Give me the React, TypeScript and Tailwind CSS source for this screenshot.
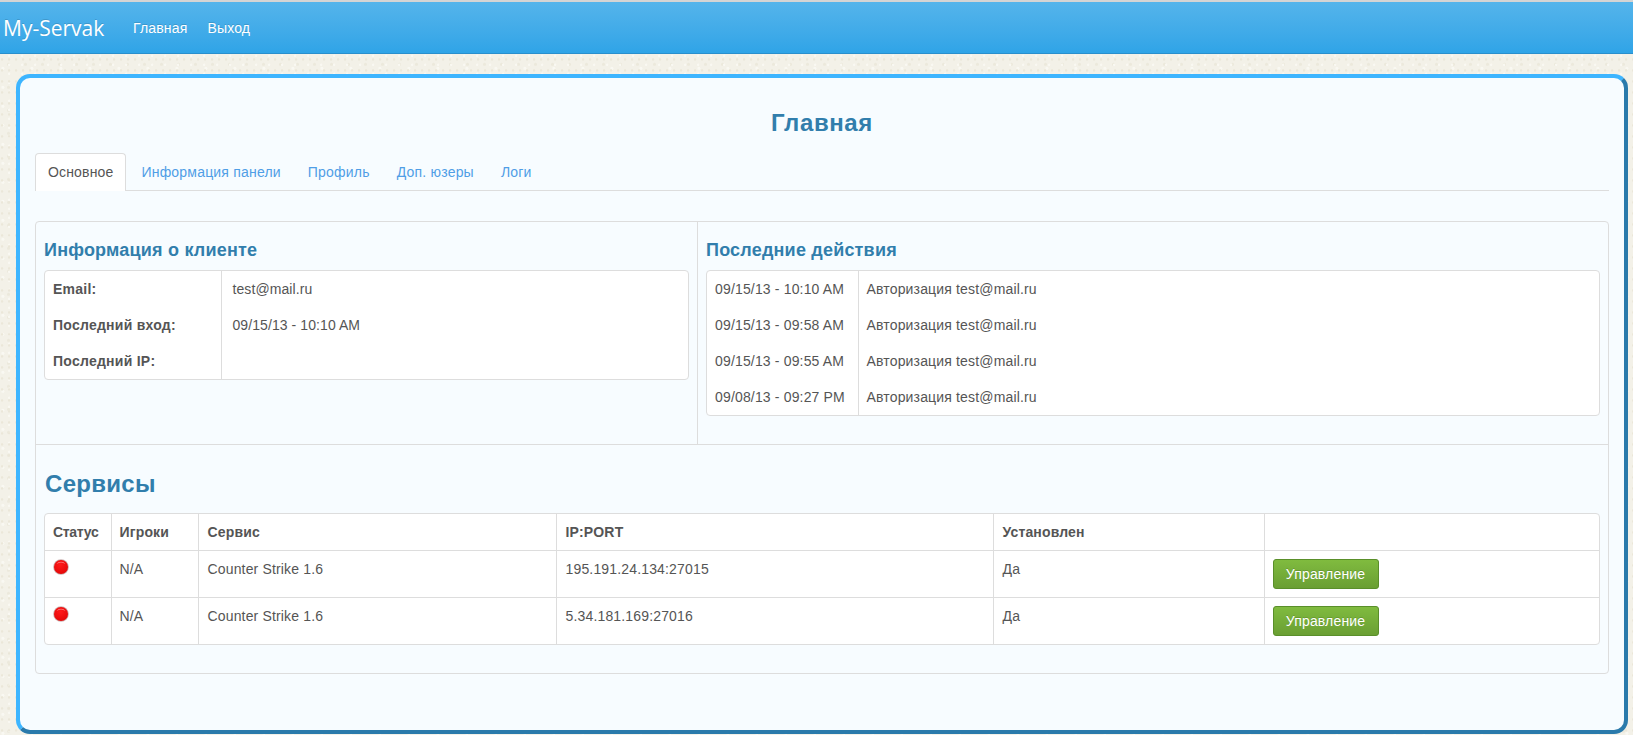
const sans = "font-['Liberation_Sans',Arial,sans-serif]";

function Dot() {
  return (
    <svg width="16" height="16" viewBox="0 0 16 16" className="block">
      <defs>
        <radialGradient id="dotFill" cx="45%" cy="35%" r="65%">
          <stop offset="0%" stopColor="#ff1a1a" />
          <stop offset="100%" stopColor="#e40808" />
        </radialGradient>
      </defs>
      <circle cx="8" cy="8" r="7.8" fill="#c9b0b0" />
      <circle cx="8" cy="8" r="7" fill="url(#dotFill)" />
      <path d="M3.4 5.2 A5.6 5.6 0 0 1 12.6 5.2 A8 8 0 0 0 3.4 5.2Z" fill="#ff9a9a" opacity="0.8" />
    </svg>
  );
}

function InfoTable({ rows, first, firstBold }: { rows: string[][]; first: number; firstBold?: boolean }) {
  return (
    <div className="overflow-hidden rounded-[4px] border border-[#dddddd] bg-white">
      <table className="w-full table-fixed border-collapse">
        <colgroup>
          <col style={{ width: first }} />
          <col />
        </colgroup>
        <tbody>
          {rows.map((r) => (
            <tr key={r[0] + r[1]} className="h-9">
              <td className={`border-r border-[#dddddd] px-2 py-2 align-top leading-5 ${firstBold ? "font-bold tracking-[0.25px]" : ""}`}>
                {r[0]}
              </td>
              <td className={`py-2 pr-2 align-top leading-5 ${firstBold ? "pl-[11px] tracking-[0.08px]" : "pl-2"}`}>{r[1]}</td>
            </tr>
          ))}
        </tbody>
      </table>
    </div>
  );
}

const services = [
  ["N/A", "Counter Strike 1.6", "195.191.24.134:27015", "Да"],
  ["N/A", "Counter Strike 1.6", "5.34.181.169:27016", "Да"],
];

function ManageButton() {
  return (
    <button className="h-[30px] w-[106px] rounded-[3px] border border-[#5a8f2a] bg-gradient-to-b from-[#80bb3f] to-[#6a9f33] text-center text-[14px] leading-5 text-white [text-shadow:0_-1px_0_rgba(0,0,0,0.15)]">
      Управление
    </button>
  );
}

export default function App() {
  return (
    <div
      className={`h-[735px] w-full overflow-hidden bg-[#f3f1e8] bg-[radial-gradient(circle_at_30%_40%,#ebe7d9_0.8px,transparent_1.6px),radial-gradient(circle_at_70%_20%,#f9f8f2_0.8px,transparent_1.6px),radial-gradient(circle_at_50%_80%,#ece9dc_1px,transparent_2px),radial-gradient(circle_at_10%_60%,#f9f8f2_1px,transparent_2px)] bg-[length:7px_11px,13px_9px,17px_23px,29px_19px] text-[14px] leading-5 tracking-[0.16px] text-[#555555] ${sans}`}
    >
      <header className="flex h-[54px] items-center border-t-2 border-b border-t-[#d4d4d4] border-b-[#2a8fcc] bg-gradient-to-b from-[#54b4eb] to-[#2fa4e7] pl-[3px] text-white [text-shadow:0_-1px_0_rgba(0,0,0,0.15)]">
        <span className="w-[130px] font-['Open_Sans',sans-serif] text-[21px] tracking-normal">My-Servak</span>
        <nav className="flex gap-[20px]">
          <a>Главная</a>
          <a>Выход</a>
        </nav>
      </header>

      <main className="mt-5 mr-[5px] ml-4 h-[660px] rounded-[14px] border-4 border-t-[#3db5ff] border-r-[#2a7aab] border-b-[#2a7aab] border-l-[#3db5ff] bg-[#f7fcff] px-[15px]">
        <h1 className="mt-[30px] text-center text-[24px] leading-[30px] font-bold tracking-[0.6px] text-[#317eac]">Главная</h1>

        <div className="mt-[15px] flex h-[38px] items-stretch border-b border-[#dddddd]">
          <a className="-mb-px rounded-t-[4px] border border-b-0 border-[#dddddd] bg-white px-[12px] pt-2 text-[#555555]">Основное</a>
          <div className="flex gap-[27px] pl-[15px] pt-[9px] tracking-[0.2px] text-[#4f9ee6]">
            <a>Информация панели</a>
            <a>Профиль</a>
            <a>Доп. юзеры</a>
            <a>Логи</a>
          </div>
        </div>

        <section className="mt-[30px] h-[453px] rounded-[4px] border border-[#dddddd]">
          <div className="grid h-[223px] grid-cols-[662px_1fr] border-b border-[#dddddd]">
            <div className="border-r border-[#dddddd] px-2">
              <h3 className="mt-[18px] mb-[10px] text-[18px] leading-5 font-bold tracking-[0.2px] text-[#317eac]">Информация о клиенте</h3>
              <InfoTable
                first={176}
                firstBold
                rows={[
                  ["Email:", "test@mail.ru"],
                  ["Последний вход:", "09/15/13 - 10:10 AM"],
                  ["Последний IP:", ""],
                ]}
              />
            </div>
            <div className="px-2">
              <h3 className="mt-[18px] mb-[10px] text-[18px] leading-5 font-bold tracking-[0.2px] text-[#317eac]">Последние действия</h3>
              <InfoTable
                first={151}
                rows={[
                  ["09/15/13 - 10:10 AM", "Авторизация test@mail.ru"],
                  ["09/15/13 - 09:58 AM", "Авторизация test@mail.ru"],
                  ["09/15/13 - 09:55 AM", "Авторизация test@mail.ru"],
                  ["09/08/13 - 09:27 PM", "Авторизация test@mail.ru"],
                ]}
              />
            </div>
          </div>

          <div className="px-2">
            <h2 className="mt-[26px] mb-[16px] pl-px text-[24px] leading-[26px] font-bold tracking-[0.3px] text-[#317eac]">Сервисы</h2>
            <div className="overflow-hidden rounded-[4px] border border-[#dddddd] bg-white">
              <table className="w-full table-fixed border-collapse">
                <colgroup>
                  <col className="w-[66px]" />
                  <col className="w-[87px]" />
                  <col className="w-[358px]" />
                  <col className="w-[437px]" />
                  <col className="w-[271px]" />
                  <col />
                </colgroup>
                <thead>
                  <tr className="h-[36px]">
                    {["Статус", "Игроки", "Сервис", "IP:PORT", "Установлен", ""].map((h, i) => (
                      <th
                        key={i}
                        className={`border-r border-b border-[#dddddd] text-left align-middle font-bold last:border-r-0 ${i === 0 ? "px-2 tracking-[-0.3px]" : i === 1 ? "px-2 tracking-[0.15px]" : "pr-2 pl-[9px] tracking-[0.15px]"}`}
                      >
                        {h}
                      </th>
                    ))}
                  </tr>
                </thead>
                <tbody>
                  {services.map((s, i) => (
                    <tr key={s[2]} className={`h-[47px] ${i === 0 ? "border-b border-[#dddddd]" : ""}`}>
                      <td className="border-r border-[#dddddd] px-2 pt-2 align-top"><Dot /></td>
                      {s.map((c, j) => (
                        <td key={c} className={`border-r border-[#dddddd] pt-2 pr-2 align-top ${j === 0 ? "pl-2" : "pl-[9px]"}`}>{c}</td>
                      ))}
                      <td className="px-2 pt-2 align-top"><ManageButton /></td>
                    </tr>
                  ))}
                </tbody>
              </table>
            </div>
          </div>
        </section>
      </main>
    </div>
  );
}
